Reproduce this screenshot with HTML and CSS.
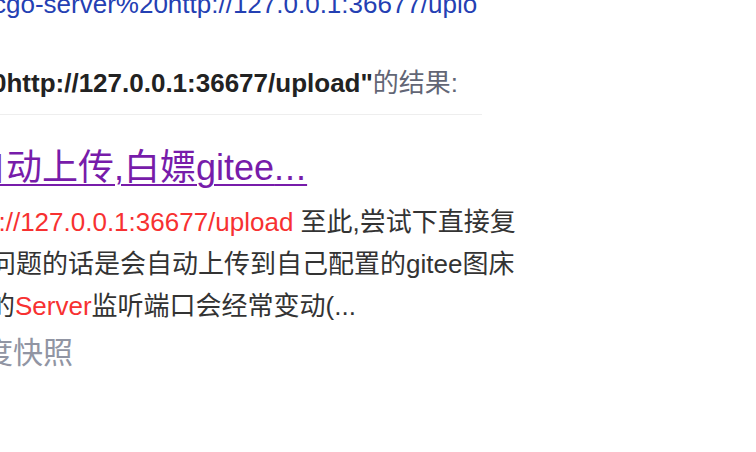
FILE: index.html
```html
<!DOCTYPE html>
<html lang="zh-CN">
<head>
<meta charset="utf-8">
<title>搜索结果</title>
<link rel="stylesheet" href="styles.css">
</head>
<body>
<div class="page">
  <div class="crumb"><a class="crumb-link" href="#">cgo-server%20http://127.0.0.1:36677/uplo</a></div>
  <div class="query"><b class="query-term">0http://127.0.0.1:36677/upload"</b>的结果:</div>
  <div class="result">
    <h3 class="title"><a class="title-link" href="#">自动上传,白嫖gitee<span class="dots">...</span></a></h3>
    <div class="abstract">
      <div class="line l1"><em class="hl">p://127.0.0.1:36677/upload</em> 至此,尝试下直接复</div>
      <div class="line l2">问题的话是会自动上传到自己配置的gitee图床</div>
      <div class="line l3">的<em class="hl">Server</em>监听端口会经常变动(...</div>
    </div>
    <div class="snap">度快照</div>
  </div>
</div>
</body>
</html>
```

FILE: styles.css
```css
html, body {
  margin: 0;
  padding: 0;
  background: #fff;
}
body {
  width: 756px;
  height: 452px;
  overflow: hidden;
  font-family: "Liberation Sans", "Noto Sans CJK SC", sans-serif;
  color: #333;
}
.page {
  display: flex;
  flex-direction: column;
}
.crumb {
  margin-top: -9px;
  font-size: 26px;
  line-height: 26px;
  white-space: nowrap;
  text-indent: -7px;
}
.crumb-link {
  color: #2440b3;
  text-decoration: none;
}
.query {
  margin-top: 46px;
  width: 482px;
  font-size: 26px;
  line-height: 40px;
  white-space: nowrap;
  text-indent: -8px;
  color: #626675;
  padding-bottom: 11px;
  border-bottom: 1px solid #eeeeee;
}
.query-term {
  color: #222;
  font-weight: bold;
}
.result {
  display: flex;
  flex-direction: column;
}
.title {
  margin: 31px 0 0 0;
  font-size: 36px;
  line-height: 44px;
  font-weight: normal;
  white-space: nowrap;
  text-indent: -30px;
}
.title-link {
  color: #771caa;
  text-decoration: underline;
  text-underline-offset: 4px;
  text-decoration-thickness: 2px;
}
.dots {
  letter-spacing: 1px;
}
.abstract {
  margin-top: 11px;
  font-size: 26px;
  line-height: 42px;
}
.line {
  white-space: nowrap;
}
.l1 { text-indent: -16px; }
.l2 { text-indent: -10px; }
.l3 { text-indent: -11px; }
.hl {
  font-style: normal;
  color: #f73131;
}
.snap {
  margin-top: 6px;
  font-size: 30px;
  line-height: 40px;
  color: #9195a3;
  text-indent: -17px;
  white-space: nowrap;
}
```
